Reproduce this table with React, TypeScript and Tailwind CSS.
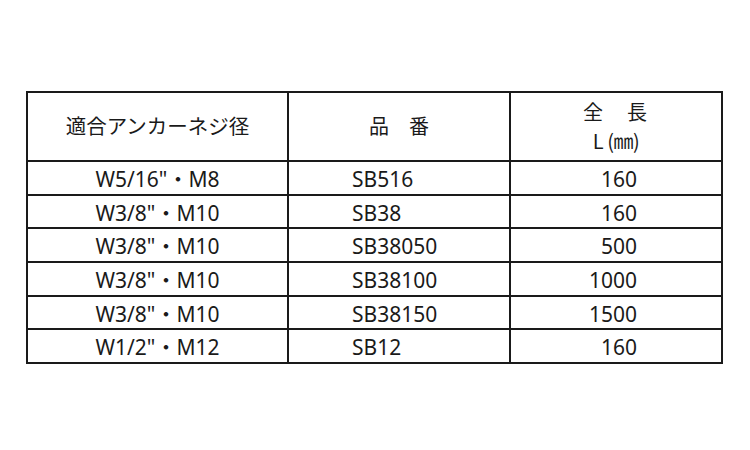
const rows = [
  { size: 'W5/16"・M8', code: "SB516", len: "160" },
  { size: 'W3/8"・M10', code: "SB38", len: "160" },
  { size: 'W3/8"・M10', code: "SB38050", len: "500" },
  { size: 'W3/8"・M10', code: "SB38100", len: "1000" },
  { size: 'W3/8"・M10', code: "SB38150", len: "1500" },
  { size: 'W1/2"・M12', code: "SB12", len: "160" },
];

export default function App() {
  return (
    <div
      className="w-[750px] h-[450px] bg-white pt-[91px] pl-[26px] text-[#1a1a1a]"
      style={{ fontFamily: '"Noto Sans", "Noto Sans CJK JP", sans-serif' }}
    >
      <div className="w-[697px] border-2 border-[#1a1a1a]">
        <div className="grid grid-cols-[261px_222px_1fr] h-[67px]">
          <div className="flex items-center justify-center text-[20.5px] border-r-2 border-[#1a1a1a]">
            適合アンカーネジ径
          </div>
          <div className="flex items-center justify-center text-[20px] border-r-2 border-[#1a1a1a]">
            品　番
          </div>
          <div className="flex flex-col items-center justify-center leading-[1.4]">
            <span className="text-[20px] tracking-[2px]">全　長</span>
            <span
              className="text-[20px] tracking-[-0.5px]"
              style={{ fontFamily: '"Noto Sans CJK JP", sans-serif' }}
            >
              L (㎜)
            </span>
          </div>
        </div>
        {rows.map((r, i) => (
          <div
            key={i}
            className="grid grid-cols-[261px_222px_1fr] h-[33.7px] border-t-2 border-[#1a1a1a] text-[21px] leading-none"
          >
            <div className="flex items-center justify-center pt-[3px] border-r-2 border-[#1a1a1a]">
              {r.size}
            </div>
            <div className="flex items-center pl-[63px] pt-[3px] border-r-2 border-[#1a1a1a]">
              {r.code}
            </div>
            <div className="flex items-center justify-end pr-[84px] pt-[3px]">{r.len}</div>
          </div>
        ))}
      </div>
    </div>
  );
}
